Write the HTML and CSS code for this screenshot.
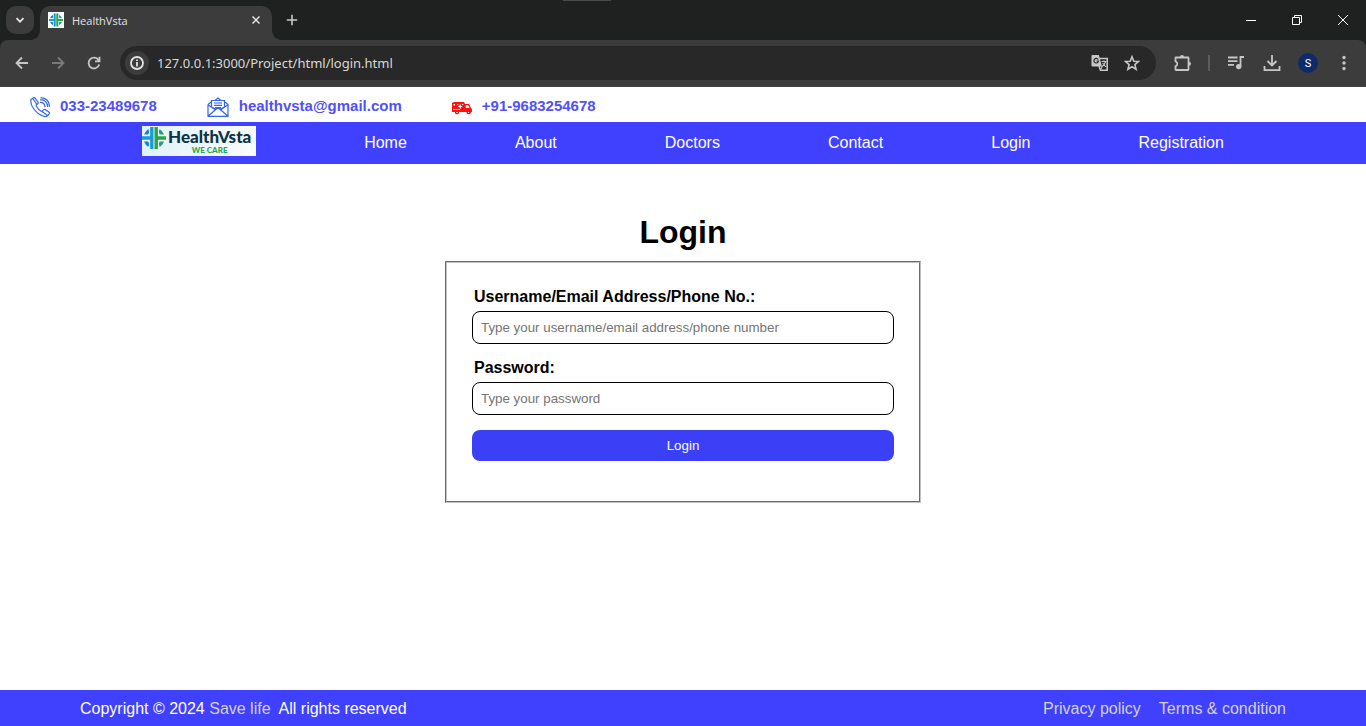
FILE: index.html
```html
<!DOCTYPE html>
<html lang="en">
<head>
<meta charset="utf-8">
<meta name="viewport" content="width=device-width, initial-scale=1">
<title>HealthVsta</title>
<link rel="stylesheet" href="styles.css">
</head>
<body>
<svg class="defs" width="0" height="0" aria-hidden="true">
  <symbol id="mark" viewBox="0 0 24 24">
    <path d="M12 2.500a9.500 9.500 0 0 0 0 19z" fill="#1583c4"/>
    <path d="M12 2.500a9.500 9.500 0 0 1 0 19z" fill="#2a9a78"/>
    <path d="M12 0v24M0 12h24" stroke="#eef8fb" stroke-width="9.500"/>
    <path d="M12 0v24" stroke="#eef8fb" stroke-width="10"/>
    <path d="M9.800 1v22M0 12h9.800" fill="none" stroke="#1a9ad8" stroke-width="3.400"/>
    <path d="M14.200 1v22M24 12h-9.800" fill="none" stroke="#27a648" stroke-width="3.400"/>
    <path d="M2 8.500Q3.200 5 6.500 3v5.500zM2 15.500Q3.200 19 6.500 21v-5.500z" fill="#1583c4"/>
    <path d="M22 8.500Q20.800 5 17.500 3v5.500zM22 15.500Q20.800 19 17.500 21v-5.500z" fill="#2a9a78"/>
  </symbol>
</svg>

<div class="tabstrip">
  <button class="tab-search" aria-label="Search tabs"><svg width="12" height="12" viewBox="0 0 12 12"><path d="M2.500 4.200L6 7.700l3.500-3.500"/></svg></button>
  <div class="tab">
    <svg class="favicon" width="16" height="16"><rect width="16" height="16" fill="#fff"/><use href="#mark" x="1" y="1" width="14" height="14"/></svg>
    <span class="tab-title">HealthVsta</span>
    <button class="icon-btn" aria-label="Close tab"><svg width="10" height="10" viewBox="0 0 10 10"><path d="M1.500 1.500l7 7M8.500 1.500l-7 7"/></svg></button>
  </div>
  <button class="icon-btn new-tab" aria-label="New tab"><svg width="12" height="12" viewBox="0 0 12 12"><path d="M6 .8v10.400M.8 6h10.400"/></svg></button>
  <div class="window-controls">
    <button aria-label="Minimize"><svg width="12" height="12" viewBox="0 0 12 12"><path d="M1 6.500h10"/></svg></button>
    <button aria-label="Restore"><svg width="12" height="12" viewBox="0 0 12 12"><path d="M1.500 3.500h7v7h-7zM3.500 3.500v-2h7v7h-2"/></svg></button>
    <button aria-label="Close"><svg width="12" height="12" viewBox="0 0 12 12"><path d="M1 1l10 10M11 1L1 11"/></svg></button>
  </div>
  <span class="handle"></span>
</div>

<div class="toolbar-back">
<div class="toolbar">
  <div class="nav-buttons">
    <button class="icon-btn" aria-label="Back"><svg width="14" height="14" viewBox="0 0 14 14"><path d="M13 7H1.500M7 1.500L1.500 7 7 12.500"/></svg></button>
    <button class="icon-btn faded" aria-label="Forward"><svg width="14" height="14" viewBox="0 0 14 14"><path d="M1 7h11.500M7 1.500L12.500 7 7 12.500"/></svg></button>
    <button class="icon-btn" aria-label="Reload"><svg width="14" height="14" viewBox="0 0 14 14"><path d="M12.200 8.500A5.400 5.400 0 1 1 11.500 4l1 1.200M12.500.8v4.500H8"/></svg></button>
  </div>
  <div class="omnibox">
    <button class="site-info" aria-label="Site information"><svg width="14" height="14" viewBox="0 0 14 14"><circle cx="7" cy="7" r="6"/><path d="M7 6v4.500M7 3.500v1.600"/></svg></button>
    <input class="url" type="text" aria-label="Address" value="127.0.0.1:3000/Project/html/login.html">
    <button class="icon-btn" aria-label="Translate"><svg width="18" height="18" viewBox="0 0 18 18"><path d="M8 4.500h8.200v11.700H9.500L8 12"/><path d="M1.500 1h6.300L11 12.500H1.500q-1 0-1-1V2q0-1 1-1z" fill="#c7c7c7" stroke="none"/><path d="M7.200 5.500A2.300 2.300 0 1 0 7.500 7H5.500" stroke="#282828" stroke-width="1.200"/><path d="M10.500 7.500h5M13 6.500v1M14.500 7.500q-1 4-4 5.500M11.500 9l3.500 4M11 13l-1.500 3" stroke-width="1.100"/></svg></button>
    <button class="icon-btn" aria-label="Bookmark"><svg width="16" height="16" viewBox="0 0 16 16"><path d="M8 1.700l1.800 4.500 4.700.3-3.600 3.100 1.200 4.700L8 11.800l-4.100 2.500 1.200-4.700L1.500 6.500l4.700-.3z"/></svg></button>
  </div>
  <button class="icon-btn extensions" aria-label="Extensions"><svg width="18" height="18" viewBox="0 0 18 18"><path d="M3 3.500h12q.5 0 .5.500v11.500q0 .5-.5.500H3q-.5 0-.5-.5v-3.200q1.800-.5 1.800-2.500t-1.800-2.500V4q0-.5.500-.5z"/><path d="M7 3a2 2 0 0 1 4 0zM16 7.800a2 2 0 0 1 0 4z" fill="#c7c7c7" stroke="none"/></svg></button>
  <span class="divider"></span>
  <button class="icon-btn" aria-label="Media"><svg width="18" height="16" viewBox="0 0 18 16"><path d="M1 2.500h9.500M1 6.200h9.500M1 9.800h6M13.500 11.500V2h3.500"/><circle cx="11.700" cy="11.600" r="1.800" fill="#c7c7c7"/></svg></button>
  <button class="icon-btn" aria-label="Downloads"><svg width="18" height="18" viewBox="0 0 18 18"><path d="M9 1v10M4.500 7L9 11.500 13.500 7M1.500 12v4.200h15V12"/></svg></button>
  <button class="avatar" aria-label="Profile">S</button>
  <button class="icon-btn" aria-label="Menu"><svg width="4" height="16" viewBox="0 0 4 16"><g fill="#c7c7c7" stroke="none"><circle cx="2" cy="2.500" r="1.700"/><circle cx="2" cy="8" r="1.700"/><circle cx="2" cy="13.500" r="1.700"/></g></svg></button>
</div>
</div>

<header>
  <div class="contacts">
    <a href="tel:033-23489678"><svg width="20" height="20" viewBox="0 0 20 20"><path d="M1 2.500L3.500.8Q4.500.3 5.300 1.300L8 5q.6 1-.3 1.700L6.300 8q-.4.500 0 1.200 2 3.300 4.800 5 .7.400 1.200-.1l1.200-1.300q.7-.9 1.700-.3l3.700 2.500q1 .8.200 1.800l-1.700 2q-1.500 1.300-4.500.2Q7.500 17 3.500 11.500 0 6.500 1 2.500zM3 2l4 5.500M12 14.500l5.500 4M10 5.200q4.600.4 5.200 5M10.200 2.700q7 .3 7.500 7.300M10.500.7q8.500.3 9 9"/></svg>033-23489678</a>
    <a href="mailto:healthvsta@gmail.com"><svg width="22" height="20" viewBox="0 0 22 20"><path d="M1 7.500v11.800h20V7.500L18 5M4 5L1 7.500M4.500 10V3.500h13V10M8 3.500L11 1l3 2.500M1 7.800L8.500 13M21 7.800L13.500 13M1.300 19l8-7q1.700-1.200 3.400 0l8 7M4.500 10l5 2.500M17.500 10l-5 2.500M7 6h8M7 8.300h8M8 10.600h6"/></svg>healthvsta@gmail.com</a>
    <a href="tel:+91-9683254678"><svg class="ambulance" width="20" height="14" viewBox="0 0 20 14"><path fill="#f11" d="M0 2l2-1h10l1 2h4l2 4 1 1v3h-1a2 2 0 0 1-4 0H7a2 2 0 0 1-4 0H0z"/><path fill="#fff" d="M1.500 3h1.500v1.500H1.500zM5 3h1.200v1H5zM10 3h1.300v1H10zM13.700 4.300h2.500L17.500 7h-3.800zM1 8h7v.7H1z"/><path stroke="#fff" stroke-width="1.200" d="M8.200 3.500v4M6.200 5.500h4"/><circle cx="5" cy="11.400" r="1.900" fill="#d11"/><circle cx="16.500" cy="11.400" r="1.900" fill="#d11"/><circle cx="5" cy="11.400" r=".7" fill="#fff"/><circle cx="16.500" cy="11.400" r=".7" fill="#fff"/></svg>+91-9683254678</a>
  </div>
  <nav class="main-nav">
    <a class="logo" href="#">
      <svg width="24" height="24"><use href="#mark" width="24" height="24"/></svg>
      <span class="logo-text"><span class="logo-name">HealthVsta</span><span class="logo-tag">WE CARE</span></span>
    </a>
    <a href="#">Home</a>
    <a href="#">About</a>
    <a href="#">Doctors</a>
    <a href="#">Contact</a>
    <a href="#">Login</a>
    <a href="#">Registration</a>
  </nav>
</header>

<main>
  <h1>Login</h1>
  <form class="login-box">
    <label for="username">Username/Email Address/Phone No.:</label>
    <input id="username" type="text" placeholder="Type your username/email address/phone number">
    <label for="password">Password:</label>
    <input id="password" type="password" placeholder="Type your password">
    <button type="submit">Login</button>
  </form>
</main>

<footer>
  <p>Copyright © 2024 <a href="#">Save life</a>&nbsp; All rights reserved</p>
  <div class="legal"><a href="#">Privacy policy</a><a href="#">Terms &amp; condition</a></div>
</footer>
</body>
</html>
```

FILE: styles.css
```css
* { box-sizing: border-box; }

body {
  margin: 0;
  min-height: 100vh;
  display: flex;
  flex-direction: column;
  background: #fff;
  font-family: "Liberation Sans", Arial, sans-serif;
  font-size: 16px;
}

a { text-decoration: none; color: inherit; }

.defs { position: absolute; }

/* Browser frame */
.tabstrip {
  position: relative;
  display: flex;
  align-items: center;
  height: 40px;
  padding-left: 6px;
  background: #1f2120;
  font-family: "Open Sans", "Noto Sans", sans-serif;
}

.tabstrip button,
.toolbar button {
  display: flex;
  align-items: center;
  justify-content: center;
  border: 0;
  padding: 0;
  background: none;
}

.tabstrip svg,
.toolbar svg {
  fill: none;
  stroke: #c7c7c7;
  stroke-width: 1.8;
}

.tabstrip .favicon { stroke: none; }

.tabstrip .tab-search {
  width: 28px;
  height: 28px;
  border-radius: 10px;
  background: #3c3c3c;
}

.tab-search svg { stroke: #e3e3e3; }

.tab {
  align-self: flex-end;
  display: flex;
  align-items: center;
  gap: 8px;
  width: 232px;
  height: 34px;
  margin-left: 6px;
  padding: 0 6px 6px 8px;
  border-radius: 10px 10px 0 0;
  background: #3c3c3c;
  position: relative;
}

.tab::before,
.tab::after {
  content: "";
  position: absolute;
  bottom: 0;
  width: 10px;
  height: 10px;
}

.tab::before {
  right: 100%;
  background: radial-gradient(circle at 0 0, transparent 10px, #3c3c3c 10px);
}

.tab::after {
  left: 100%;
  background: radial-gradient(circle at 100% 0, transparent 10px, #3c3c3c 10px);
}

.tab-title {
  flex: 1;
  color: #e3e3e3;
  font-size: 11px;
}

.icon-btn { min-width: 20px; height: 20px; }

.tab .icon-btn svg { stroke: #e3e3e3; stroke-width: 1.5; }

.new-tab { margin-left: 10px; }

.tabstrip .new-tab svg { stroke-width: 1.6; }

.window-controls { display: flex; margin-left: auto; }

.window-controls button { width: 46px; height: 40px; }

.tabstrip .window-controls svg { stroke: #fff; stroke-width: 1; }

.handle {
  position: absolute;
  top: 0;
  left: 563px;
  width: 48px;
  height: 1px;
  background: #4a4a4a;
}

.toolbar-back { background: #1f2120; }

.toolbar {
  display: flex;
  align-items: center;
  gap: 16px;
  height: 47px;
  padding: 0 12px;
  border-radius: 8px 8px 0 0;
  border-bottom: 1px solid #444;
  background: #3c3c3c;
  font-family: "Open Sans", "Noto Sans", sans-serif;
}

.nav-buttons { display: flex; gap: 16px; }

.faded { opacity: 0.45; }

.omnibox {
  flex: 1;
  display: flex;
  align-items: center;
  gap: 12px;
  height: 34px;
  padding: 0 14px 0 5px;
  border-radius: 17px;
  background: #282828;
}

.omnibox .site-info {
  width: 24px;
  height: 24px;
  border-radius: 50%;
  background: #3c3c3c;
}

.site-info svg { stroke: #e3e3e3; }

.url {
  flex: 1;
  min-width: 0;
  margin-left: -4px;
  border: 0;
  padding: 0;
  outline: 0;
  background: none;
  color: #d8d8d8;
  font: 13px "Noto Sans", "Open Sans", sans-serif;
}

.toolbar .omnibox .icon-btn svg { stroke-width: 1.6; }

.divider { width: 2px; height: 16px; background: #5c5c5c; }

.toolbar .avatar {
  width: 20px;
  height: 20px;
  border-radius: 50%;
  background: #0f2a6b;
  color: #fff;
  font: 11px Roboto, sans-serif;
}

/* Site header */
.contacts {
  display: flex;
  align-items: center;
  gap: 50px;
  height: 35px;
  padding: 2px 30px 0;
  color: #5151f8;
  font-size: 15px;
  font-weight: bold;
}

.contacts a {
  display: flex;
  align-items: center;
  gap: 10px;
}

.contacts svg {
  margin-top: 2px;
  fill: none;
  stroke: #3465ea;
  stroke-width: 1.2;
}

.contacts .ambulance { margin-top: 4px; stroke: none; }

.main-nav {
  display: flex;
  justify-content: space-evenly;
  align-items: center;
  height: 42px;
  padding: 0 34px;
  background: #4040ff;
  color: #fff;
}

.logo {
  display: flex;
  width: 114px;
  height: 30px;
  margin-bottom: 4px;
  gap: 2px;
  background: linear-gradient(90deg, #e0f2f8, #f8fcfd);
  font-family: Lato, sans-serif;
}

.logo-text {
  display: flex;
  flex-direction: column;
  align-items: center;
}

.logo-name {
  color: #0d3344;
  font-size: 17px;
  font-weight: 900;
  line-height: 21px;
}

.logo-tag {
  color: #27a648;
  font-size: 8px;
  font-weight: 900;
  line-height: 7px;
}

/* Login form */
main {
  flex: 1;
  display: flex;
  flex-direction: column;
  align-items: center;
  padding-top: 50px;
}

h1 {
  margin: 0 0 11px;
  font-size: 32px;
  line-height: 36px;
}

.login-box {
  display: flex;
  flex-direction: column;
  width: 476px;
  max-width: 100%;
  padding: 25px 25px 40px;
  border: 2px groove #c0c0c0;
}

.login-box label {
  margin: 0 2px 5px;
  font-weight: bold;
  line-height: 18px;
}

.login-box input {
  height: 33px;
  margin-bottom: 15px;
  padding: 0 8px;
  border: 1px solid #000;
  border-radius: 8px;
  font-family: "Liberation Sans", Arial, sans-serif;
}

.login-box input::placeholder { color: #757575; }

.login-box button {
  height: 31px;
  border: 0;
  border-radius: 8px;
  background: #3b40f6;
  color: #fff;
  font-family: "Liberation Sans", Arial, sans-serif;
}

/* Footer */
footer {
  display: flex;
  align-items: center;
  justify-content: space-between;
  height: 36px;
  padding: 2px 80px 0;
  background: #4040ff;
  color: #fff;
}

footer p { margin: 0; }

footer a { color: #d3d3d3; }

.legal { display: flex; gap: 18px; }
```
